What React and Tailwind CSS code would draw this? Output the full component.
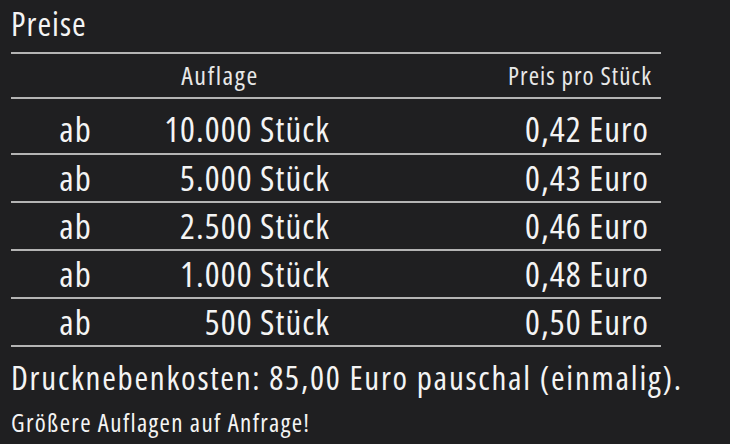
export default function App() {
  const rows = [
    { q: "10.000 Stück", p: "0,42 Euro", h: "h-[56px] pt-[6px]" },
    { q: "5.000 Stück", p: "0,43 Euro", h: "h-[48px]" },
    { q: "2.500 Stück", p: "0,46 Euro", h: "h-[48px]" },
    { q: "1.000 Stück", p: "0,48 Euro", h: "h-[48px]" },
    { q: "500 Stück", p: "0,50 Euro", h: "h-[48px]" },
  ];
  return (
    <div
      className="w-[730px] h-[444px] bg-[#1f1f21] text-[#f4f4f4] overflow-hidden pl-[11px] font-stretch-[75%] tracking-[0.065em]"
      style={{ fontFamily: "'Open Sans', sans-serif" }}
    >
      <div className="h-[52px] pt-[4px] text-[33px] leading-[40px]">Preise</div>
      <div className="w-[650px] border-t-2 border-[#b4b4b4]">
        <div className="flex items-center h-[45px] border-b-2 border-[#b4b4b4] text-[#e8e8e8]">
          <div className="w-[418px] text-center text-[26px] tracking-[0.06em]">Auflage</div>
          <div className="flex-1 text-right pr-[9px] text-[25px] tracking-[0.043em]">Preis pro Stück</div>
        </div>
        {rows.map((r, i) => (
          <div key={i} className={`flex items-center border-b-2 border-[#b4b4b4] text-[35px] leading-[40px] whitespace-nowrap ${r.h}`}>
            <div className="w-[129px] text-center">ab</div>
            <div className="w-[190px] text-right">{r.q}</div>
            <div className="flex-1 text-right pr-[12px]">{r.p}</div>
          </div>
        ))}
      </div>
      <div className="mt-[11px] text-[33px] leading-[40px] whitespace-nowrap tracking-[0.053em]">
        Drucknebenkosten: 85,00 Euro pauschal (einmalig).
      </div>
      <div className="mt-[8px] text-[25px] leading-[32px] whitespace-nowrap tracking-[0.054em]">Größere Auflagen auf Anfrage!</div>
    </div>
  );
}
